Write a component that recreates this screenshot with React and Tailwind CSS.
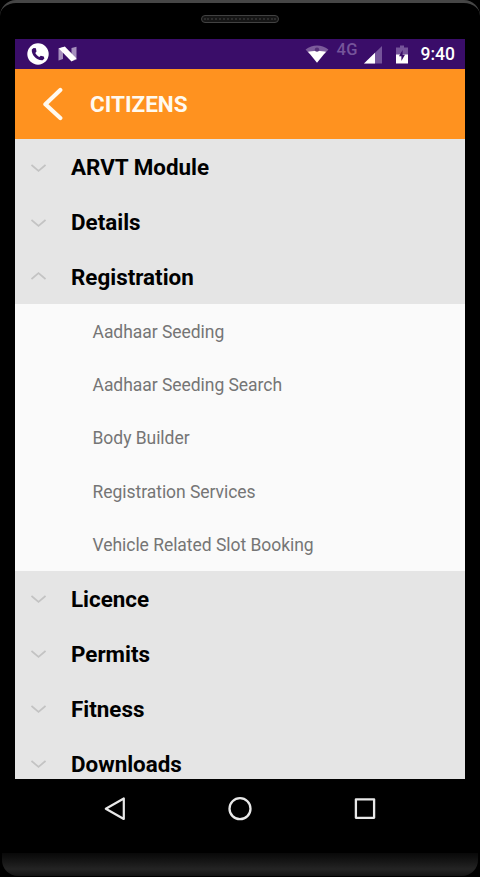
import { useState } from "react";

const SECTIONS = [
  { id: "arvt", title: "ARVT Module", items: [] },
  { id: "details", title: "Details", items: [] },
  {
    id: "registration",
    title: "Registration",
    items: [
      "Aadhaar Seeding",
      "Aadhaar Seeding Search",
      "Body Builder",
      "Registration Services",
      "Vehicle Related Slot Booking",
    ],
  },
  { id: "licence", title: "Licence", items: [] },
  { id: "permits", title: "Permits", items: [] },
  { id: "fitness", title: "Fitness", items: [] },
  { id: "downloads", title: "Downloads", items: [] },
];

function StatusBar() {
  return (
    <div className="flex h-[30px] shrink-0 items-center bg-[#3a0d69] pl-3 pr-2.5 text-white">
      {/* Phone */}
      <svg width="22" height="22" viewBox="0 0 22 22">
        <circle cx="11" cy="11" r="10.7" fill="#fff" />
        <path
          d="M6.6 5 4.8 6.6C4.2 12 9.8 17.8 15.6 17.3L17.4 15.6 16.8 13.4 13.8 12.7 12.3 14C10.6 13 9.2 11.6 8.3 9.9L9.5 8.6 8.9 5.2Z"
          fill="#3a0d69"
        />
      </svg>

      {/* Android N */}
      <svg className="ml-[9px]" width="20" height="16" viewBox="0 0 20 16">
        <path d="M.5 2.2 5 1V13L.5 14.6ZM13.5 2 18.5 .8V13.8L13.5 15Z" fill="#a58fbd" />
        <path d="M.8 2.6 6.8.4 18.5 12.5 13.5 15.4Z" fill="#fff" />
      </svg>

      <div className="flex-1"></div>

      {/* Wifi */}
      <svg width="24" height="20" viewBox="0 0 24 20">
        <path d="M.6 5.4C7.5.2 16.5.2 23.4 5.4L20 9.4H4Z" fill="#7c5c9b" />
        <path d="M3 7.8C6 6.8 18 6.8 21 7.8L12 18.8Z" fill="#fff" />
        <circle cx="12" cy="5.6" r="2.2" fill="#553078" />
      </svg>
      <span className="ml-2 -mt-2 w-[22px] text-[16.5px] leading-none font-medium tracking-[0.3px] text-[#75549a]">
        4G
      </span>

      {/* Signal */}
      <svg className="ml-[5px] mt-0.5" width="18" height="18" viewBox="0 0 18 18">
        <path d="M0 17.5 18 0V17.5Z" fill="#75549a" />
        <path d="M0 17.5 11 6.8V17.5Z" fill="#fff" />
      </svg>

      {/* Battery */}
      <svg className="ml-3.5 mt-px" width="12" height="19" viewBox="0 0 12 19">
        <path d="M4 .5h4v2h4v8H0v-8H4Z" fill="#75549a" />
        <path d="M0 9.5h12v9H0Z" fill="#fff" />
        <path d="M6.6 5 3 11.2H5.4V16L9 9.8H6.6Z" fill="#3a0d69" />
      </svg>
      <span className="ml-[13px] mt-0.5 text-[17.5px] leading-none font-medium">9:40</span>
    </div>
  );
}

function Header() {
  return (
    <div className="flex h-[70px] shrink-0 items-center bg-[#ff921f] pl-7">
      <button className="block">
        <svg width="20" height="34" viewBox="0 0 20 34" fill="none" stroke="#fffaf0" strokeWidth="4.2" strokeLinecap="round" strokeLinejoin="round">
          <path d="M17.3 3 2.4 17.2 17.3 31" />
        </svg>
      </button>
      <h1 className="ml-[27px] text-[22.5px] leading-none font-bold text-[#fffaf0]">CITIZENS</h1>
    </div>
  );
}

function Section({ section, open, onToggle }) {
  return (
    <div>
      <button onClick={onToggle} className="flex h-[55px] w-full items-center bg-[#e5e5e5] pl-4 text-left">
        <svg
          className={open ? "mb-0.5 rotate-180" : "mt-0.5"}
          width="15"
          height="8"
          viewBox="0 0 15 8"
          fill="none"
          stroke="#c3c3c3"
          strokeWidth="1.7"
        >
          <path d="M.5 1 7.5 6.8 14.5 1" />
        </svg>
        <span className="ml-[25px] pt-px text-[22.4px] leading-none font-bold text-black">{section.title}</span>
      </button>

      {open && (
        <ul className="bg-[#fafafa]">
          {section.items.map((item) => (
            <li key={item} className="flex h-[53.4px] items-center pt-0.5 pl-[77.5px] text-[17.5px] tracking-[-0.04px] text-[#757575]">
              {item}
            </li>
          ))}
        </ul>
      )}
    </div>
  );
}

function NavBar() {
  return (
    <div className="flex h-[60px] shrink-0 items-center justify-center gap-[101px]">
      <svg width="24" height="26" viewBox="0 0 24 26" fill="none" stroke="#e8e8e8" strokeWidth="2.2" strokeLinejoin="round">
        <path d="M20.8 2.5V23L2.8 12.7Z" />
      </svg>
      <svg width="24" height="24" viewBox="0 0 24 24" fill="none" stroke="#e8e8e8" strokeWidth="2.3">
        <circle cx="12" cy="11.7" r="10.5" />
      </svg>
      <svg width="24" height="24" viewBox="0 0 24 24" fill="none" stroke="#e8e8e8" strokeWidth="2.3" strokeLinejoin="round">
        <path d="M2.9 2.3H21.1V20.8H2.9Z" />
      </svg>
    </div>
  );
}

function App() {
  const [openId, setOpenId] = useState("registration");

  return (
    <div className="h-[877px] w-[480px] overflow-hidden bg-black font-['Roboto',sans-serif]">
      <div className="flex h-full flex-col rounded-t-[16px] border-t-[3px] border-[#464646]">
        {/* Speaker */}
        <div className="flex h-9 shrink-0 justify-center pt-3">
          <div className="flex h-2 w-[78px] items-center justify-center rounded-full border border-[#424242] bg-[#151515]">
            <div className="w-[72px] border-t-2 border-dotted border-[#2c2c2c]"></div>
          </div>
        </div>

        {/* Screen */}
        <div className="mx-[15px] flex h-[740px] shrink-0 flex-col overflow-hidden">
          <StatusBar />
          <Header />
          <div className="min-h-0 flex-1 overflow-hidden bg-[#e5e5e5]">
            {SECTIONS.map((s) => (
              <Section
                key={s.id}
                section={s}
                open={openId === s.id}
                onToggle={() => setOpenId(openId === s.id ? null : s.id)}
              />
            ))}
          </div>
        </div>

        <NavBar />

        {/* Chin */}
        <div className="mx-0.5 mt-[14px] h-[23px] shrink-0 rounded-b-[16px] bg-linear-to-b from-[#080808] via-[#242424] via-70% to-[#141414]"></div>
      </div>
    </div>
  );
}

export default App;
